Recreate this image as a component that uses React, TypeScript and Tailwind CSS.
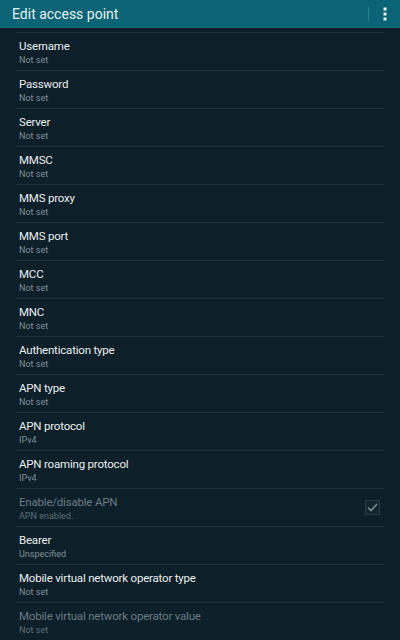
const rows: { title: string; value: string; disabled?: boolean; check?: boolean }[] = [
  { title: 'Username', value: 'Not set' },
  { title: 'Password', value: 'Not set' },
  { title: 'Server', value: 'Not set' },
  { title: 'MMSC', value: 'Not set' },
  { title: 'MMS proxy', value: 'Not set' },
  { title: 'MMS port', value: 'Not set' },
  { title: 'MCC', value: 'Not set' },
  { title: 'MNC', value: 'Not set' },
  { title: 'Authentication type', value: 'Not set' },
  { title: 'APN type', value: 'Not set' },
  { title: 'APN protocol', value: 'IPv4' },
  { title: 'APN roaming protocol', value: 'IPv4' },
  { title: 'Enable/disable APN', value: 'APN enabled.', disabled: true, check: true },
  { title: 'Bearer', value: 'Unspecified' },
  { title: 'Mobile virtual network operator type', value: 'Not set' },
  { title: 'Mobile virtual network operator value', value: 'Not set', disabled: true },
]

export default function App() {
  return (
    <div className="w-[400px] h-[640px] overflow-hidden bg-[#0d1f29] font-['Roboto',sans-serif]">
      {/* Action bar */}
      <div className="h-[28px] bg-[#0a6475] flex items-center pl-3 pr-[13px]">
        <span className="flex-1 text-[14px] text-[#e6f1f3] leading-none">Edit access point</span>
        <div className="w-px h-[14px] bg-[#2c7f8e] mr-[14px]" />
        <svg width="4" height="14" viewBox="0 0 4 14">
          <rect x="0.5" y="0.5" width="3" height="3" fill="#e8f2f4" />
          <rect x="0.5" y="5.5" width="3" height="3" fill="#e8f2f4" />
          <rect x="0.5" y="10.5" width="3" height="3" fill="#e8f2f4" />
        </svg>
      </div>

      <div className="px-4 pt-1">
        {rows.map((r) => (
          <div key={r.title} className="h-[38px] border-t border-[#1d343e] flex items-start pl-[3px] pt-[6px]">
            <div className="flex-1">
              <div className={`text-[11.5px] tracking-[-0.2px] leading-[15px] ${r.disabled ? 'text-[#6b7c84]' : 'text-[#e9eef0]'}`}>
                {r.title}
              </div>
              <div className={`text-[9px] leading-[12px] ${r.disabled ? 'text-[#5e6f77]' : 'text-[#7f9098]'}`}>
                {r.value}
              </div>
            </div>
            {r.check && (
              <div className="w-[15px] h-[15px] mt-[5px] mr-[4px] border border-[#2a3d46] bg-[#13262f] flex items-center justify-center">
                <svg width="11" height="9" viewBox="0 0 11 9">
                  <path d="M1 4.5 L4 7.5 L10 1" fill="none" stroke="#7c8a90" strokeWidth="1.6" />
                </svg>
              </div>
            )}
          </div>
        ))}
      </div>
    </div>
  )
}
